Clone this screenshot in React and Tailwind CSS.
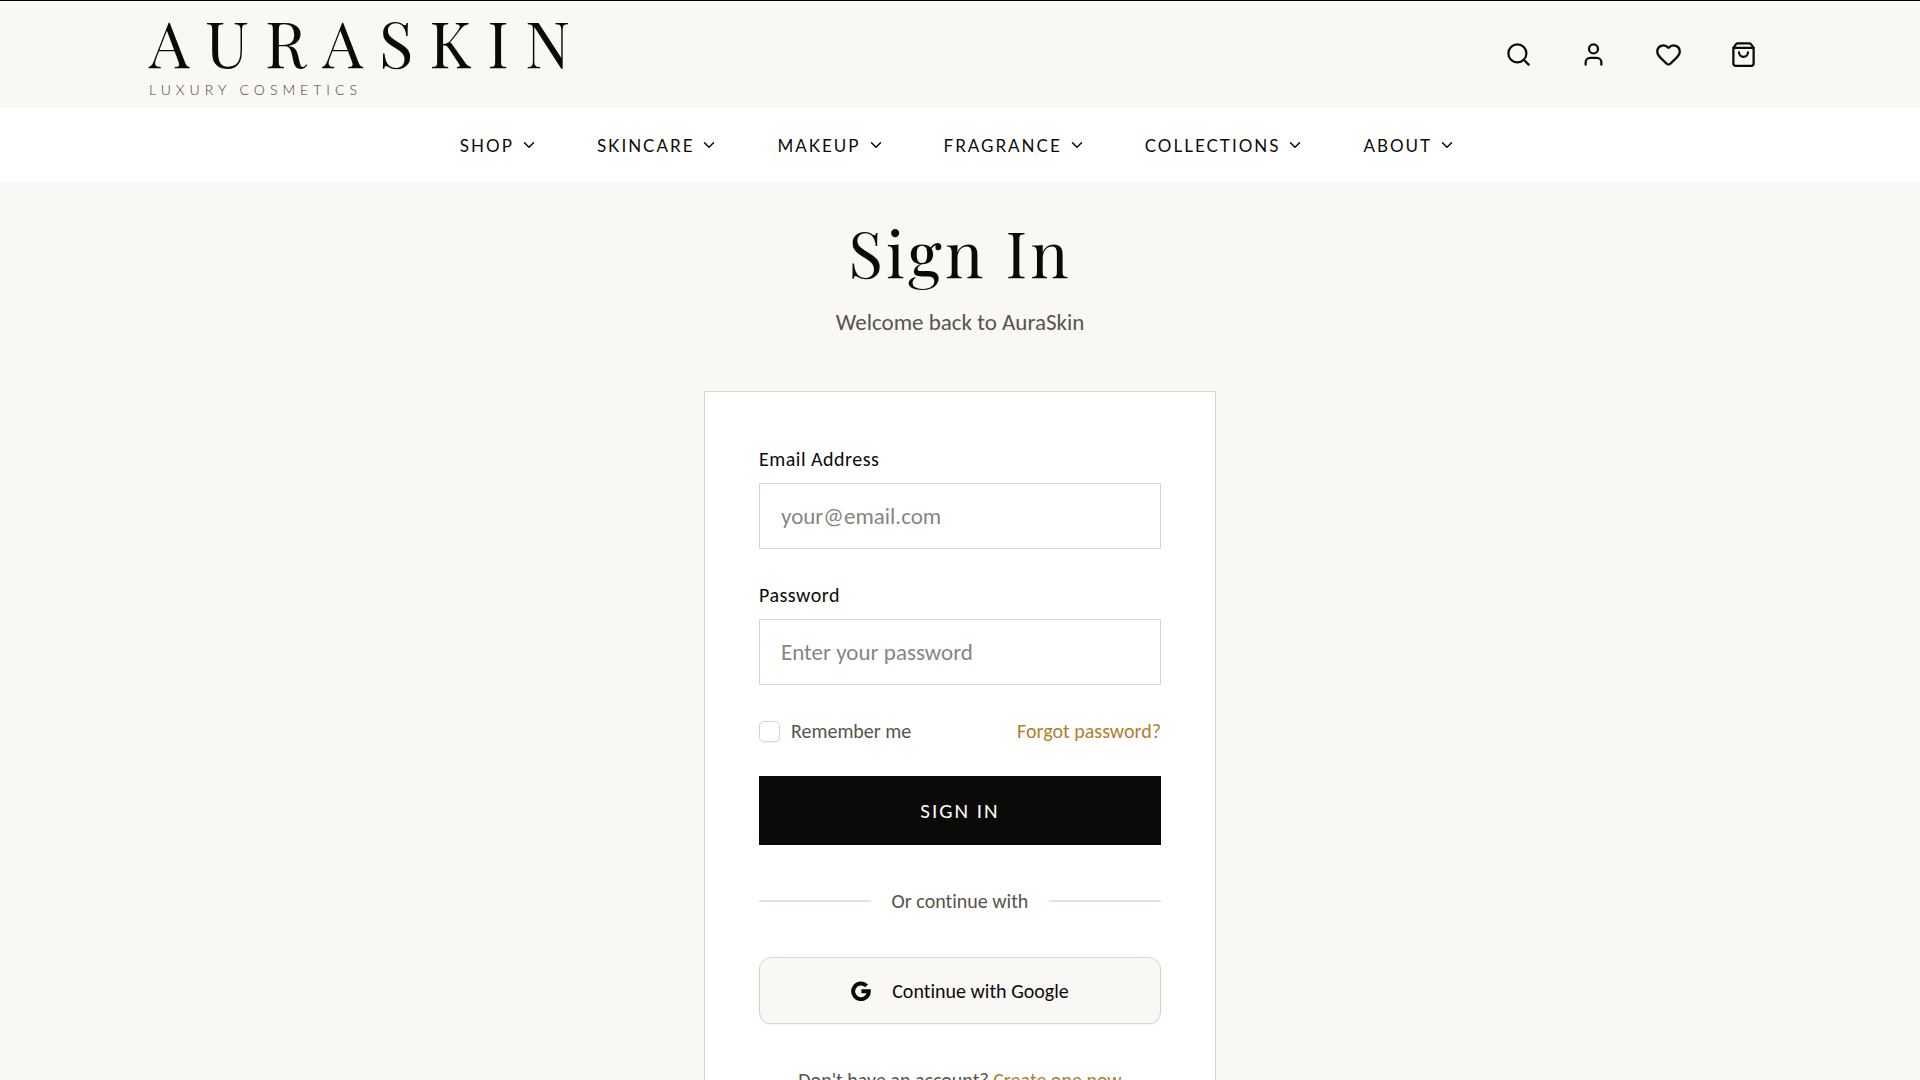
import { useState } from "react";
import { ChevronDown, Heart, Search, ShoppingBag, User } from "lucide-react";

const navItems = [
  "Shop",
  "Skincare",
  "Makeup",
  "Fragrance",
  "Collections",
  "About",
];

const actions = [
  { label: "Search", Icon: Search },
  { label: "Account", Icon: User },
  { label: "Wishlist", Icon: Heart },
  { label: "Bag", Icon: ShoppingBag },
];

function GoogleIcon() {
  return (
    <svg
      viewBox="0 0 20 20"
      className="h-5 w-5"
      fill="none"
      stroke="currentColor"
      strokeWidth="4"
      aria-hidden="true"
    >
      <path d="M15.6 4.9A7.8 7.8 0 1 0 17.8 10.3H10.4" />
    </svg>
  );
}

function Header() {
  return (
    <header className="border-t border-black font-[Lato,sans-serif]">
      <div className="mx-auto flex h-[107px] max-w-[1622px] items-center justify-between">
        <a href="#" className="block">
          <span className="mb-[6px] block font-['Playfair_Display','Liberation_Serif',serif] text-[64px] leading-[64px] tracking-[16px]">
            AURASKIN
          </span>
          <span className="block text-[14px] font-light leading-5 tracking-[5px] text-[#44403c]">
            LUXURY COSMETICS
          </span>
        </a>

        <div className="flex gap-5">
          {actions.map(({ label, Icon }) => (
            <button key={label} aria-label={label} className="p-[14px]">
              <Icon size={27} strokeWidth={2} />
            </button>
          ))}
        </div>
      </div>

      {/* Category menu */}
      <nav className="flex h-[74px] items-center justify-center gap-[59px] bg-white pr-1">
        {navItems.map((item) => (
          <button
            key={item}
            className="flex items-center gap-[6px] text-[17px] uppercase leading-[25px] tracking-[2px]"
          >
            {item}
            <ChevronDown size={18} strokeWidth={2} />
          </button>
        ))}
      </nav>
    </header>
  );
}

function Field({ id, label, type, placeholder, value, onChange }) {
  return (
    <div className="mb-[34px]">
      <label htmlFor={id} className="mb-3 block text-[20px] leading-6 tracking-wide">
        {label}
      </label>
      <input
        id={id}
        type={type}
        placeholder={placeholder}
        value={value}
        onChange={(e) => onChange(e.target.value)}
        className="h-[66px] w-full border border-[#dad3c6] bg-white px-[21px] text-[23px] outline-none placeholder:text-[#858585]"
      />
    </div>
  );
}

function App() {
  const [email, setEmail] = useState("");
  const [password, setPassword] = useState("");
  const [remember, setRemember] = useState(false);

  return (
    <div className="min-h-screen bg-[#faf8f5] font-[Carlito,Lato,sans-serif] text-[#0c0a09] [font-variant-ligatures:no-common-ligatures]">
      <Header />

      <main className="mx-auto max-w-[512px] pt-[38px] pb-16">
        <div className="mb-[53px] text-center">
          <h1 className="mb-[22px] font-['Playfair_Display','Liberation_Serif',serif] text-[64px] leading-[64px] tracking-wider">
            Sign In
          </h1>
          <p className="text-[23px] leading-8 text-[#57534e]">
            Welcome back to AuraSkin
          </p>
        </div>

        <form
          className="border border-[#dad3c6] bg-white px-[54px] py-[55px]"
          onSubmit={(e) => e.preventDefault()}
        >
          <Field
            id="email"
            label="Email Address"
            type="email"
            placeholder="your@email.com"
            value={email}
            onChange={setEmail}
          />
          <Field
            id="password"
            label="Password"
            type="password"
            placeholder="Enter your password"
            value={password}
            onChange={setPassword}
          />

          <div className="mb-[33px] flex items-center justify-between text-[20px] leading-6">
            <label className="flex items-center gap-[11px] text-[#57534e]">
              <input
                type="checkbox"
                checked={remember}
                onChange={(e) => setRemember(e.target.checked)}
                className="h-[21px] w-[21px] appearance-none rounded-[5px] border border-[#d6d3d1] bg-white shadow-xs checked:bg-[#0c0a09]"
              />
              Remember me
            </label>
            <a href="#" className="text-[#b08028]">
              Forgot password?
            </a>
          </div>

          <button
            type="submit"
            className="h-[69px] w-full bg-[#0c0a09] text-[21px] uppercase leading-6 tracking-[2px] text-white"
          >
            Sign In
          </button>

          {/* Divider */}
          <div className="my-11 flex items-center gap-[21px] text-[20px] leading-6 text-[#57534e]">
            <span className="h-0.5 flex-1 bg-[#e7e1d7]" />
            Or continue with
            <span className="h-0.5 flex-1 bg-[#e7e1d7]" />
          </div>

          <button
            type="button"
            className="flex h-[67px] w-full items-center justify-center gap-[21px] rounded-xl border border-[#dad3c6] bg-[#faf8f5] text-[20px] leading-6 shadow-xs"
          >
            <GoogleIcon />
            Continue with Google
          </button>

          <p className="mt-11 text-center text-[20px] leading-6 text-[#57534e]">
            Don't have an account?{" "}
            <a href="#" className="text-[#b08028]">
              Create one now
            </a>
          </p>
        </form>
      </main>
    </div>
  );
}

export default App;
